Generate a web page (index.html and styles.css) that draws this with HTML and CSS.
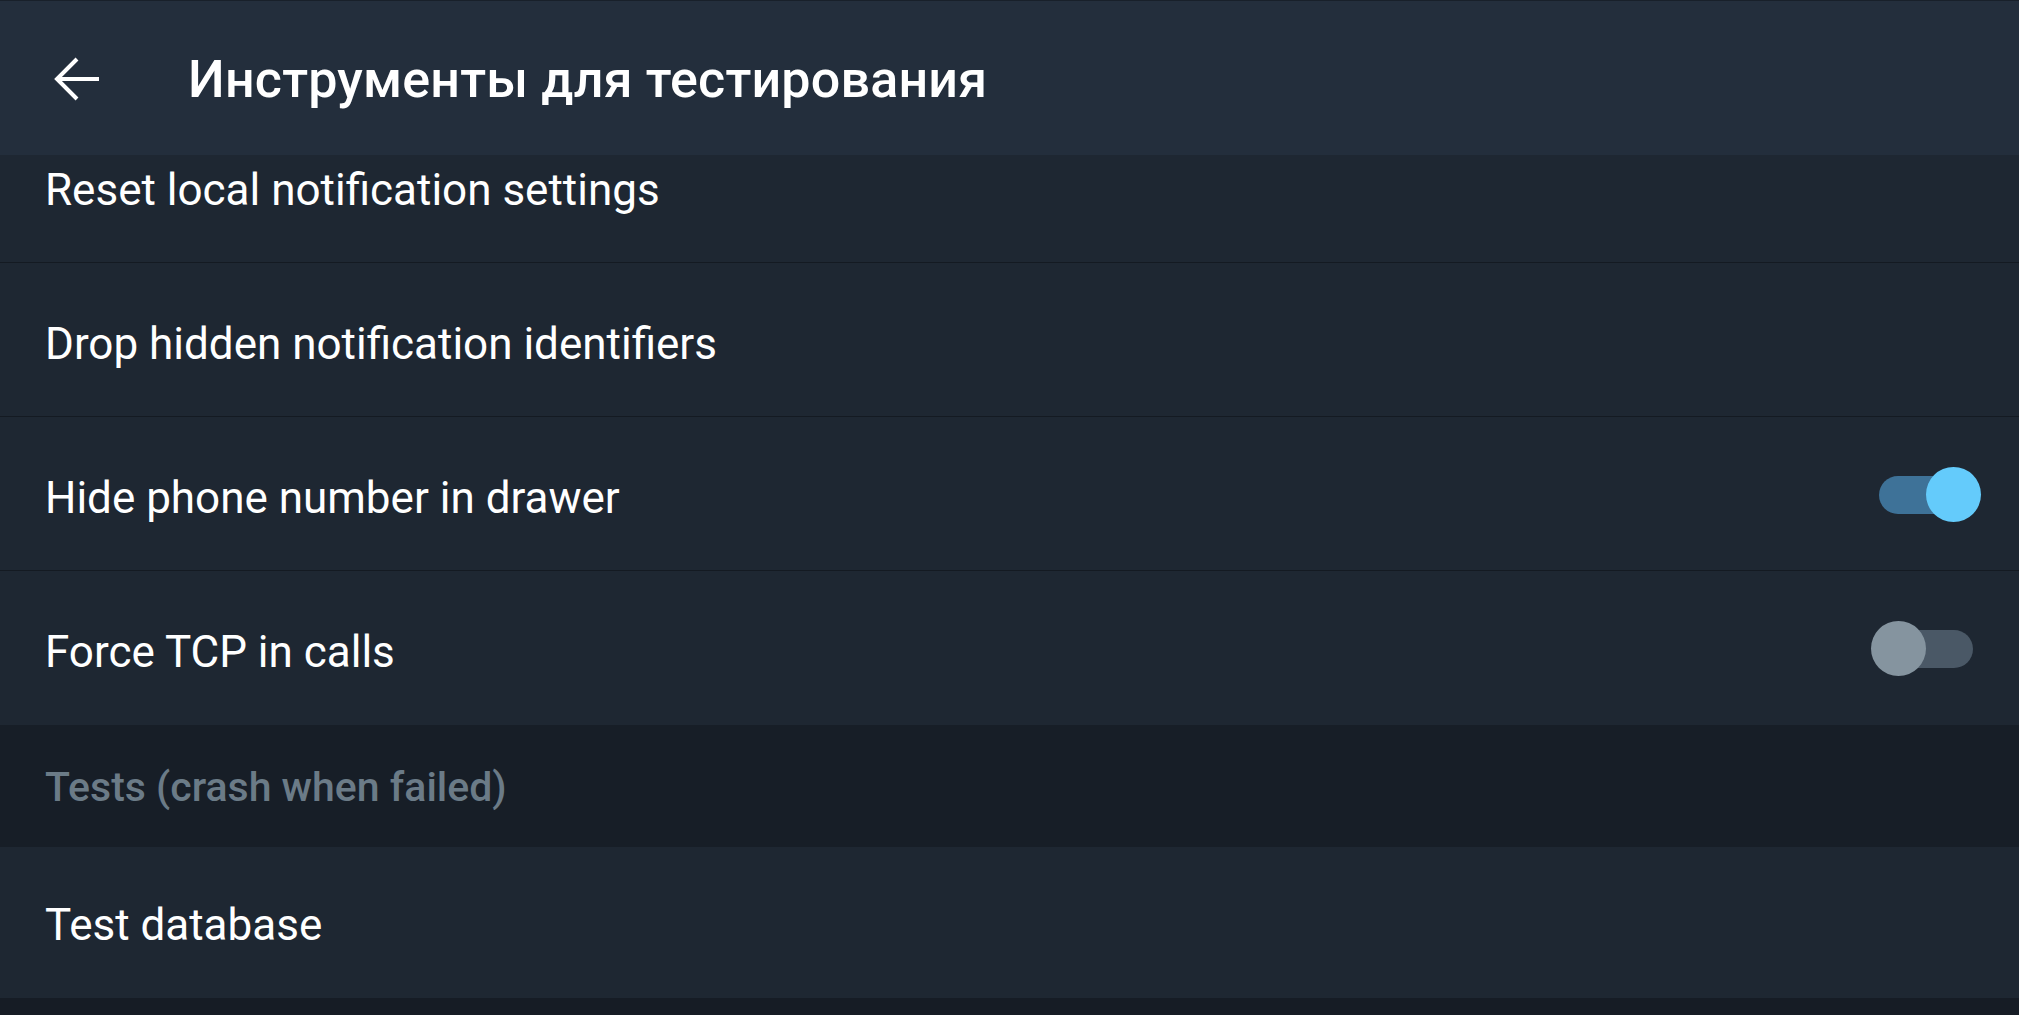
FILE: index.html
```html
<!DOCTYPE html>
<html>
<head>
    <title>Инструменты для тестирования</title>
    <link rel="stylesheet" href="styles.css">
</head>
<body>

<div class="action-bar">
    <button class="back-button" aria-label="Back">
        <svg width="46" height="46" viewBox="0 0 46 46">
            <path d="M45 23H3M23 3L3 23l20 20" fill="none" stroke="#fff" stroke-width="4"/>
        </svg>
    </button>
    <h1 class="action-title">Инструменты для тестирования</h1>
</div>

<div class="settings-list">
    <div class="settings-inner">
        <div class="setting-row">
            <span class="setting-label">Reset local notification settings</span>
        </div>
        <div class="setting-row">
            <span class="setting-label">Drop hidden notification identifiers</span>
        </div>
        <div class="setting-row">
            <span class="setting-label">Hide phone number in drawer</span>
            <span class="switch on"><span class="switch-thumb"></span></span>
        </div>
        <div class="setting-row last">
            <span class="setting-label">Force TCP in calls</span>
            <span class="switch"><span class="switch-thumb"></span></span>
        </div>
        <div class="section-header">Tests (crash when failed)</div>
        <div class="setting-row last short">
            <span class="setting-label">Test database</span>
        </div>
    </div>
</div>

</body>
</html>
```

FILE: styles.css
```css
* { margin: 0; padding: 0; box-sizing: border-box; }
body {
    font-family: Roboto, "Noto Sans", sans-serif;
    height: 100vh;
    display: flex;
    flex-direction: column;
    overflow: hidden;
    background: #161c25;
    color: #fff;
}

/* Top bar */
.action-bar {
    height: 155px;
    flex: none;
    display: flex;
    align-items: center;
    background: #232e3c;
    border-top: 1px solid #18202a;
    position: relative;
    z-index: 2;
}

.back-button {
    width: 46px;
    height: 46px;
    margin-left: 54px;
    margin-top: 2px;
    background: none;
    border: none;
    display: flex;
}

.action-title {
    margin-left: 88px;
    font-size: 52px;
    font-weight: 500;
    letter-spacing: 0.2px;
    margin-top: 2px;
}

/* List */
.settings-list {
    flex: 1;
    overflow: hidden;
}

.settings-inner {
    margin-top: -46px;
}

.setting-row {
    height: 154px;
    display: flex;
    align-items: center;
    justify-content: space-between;
    padding: 8px 46px 0 45px;
    background: #1e2732;
    border-bottom: 1px solid #141a22;
}

.setting-row.last {
    border-bottom: none;
}

.setting-row.short {
    height: 151px;
    padding-top: 4px;
}

.setting-label {
    font-size: 44px;
}

.section-header {
    height: 122px;
    display: flex;
    align-items: center;
    padding: 2px 45px 0;
    background: #171e27;
    color: #6b7b87;
    font-size: 41px;
    font-weight: 500;
}

/* Toggle switch */
.switch {
    position: relative;
    width: 94px;
    height: 38px;
    margin-bottom: 6px;
    border-radius: 19px;
    background: #4a5866;
}

.switch-thumb {
    position: absolute;
    top: -9px;
    left: -8px;
    width: 55px;
    height: 55px;
    border-radius: 50%;
    background: #85949f;
}

.switch.on {
    background: #3e7298;
}

.switch.on .switch-thumb {
    left: auto;
    right: -8px;
    background: #64cbfb;
}
```
